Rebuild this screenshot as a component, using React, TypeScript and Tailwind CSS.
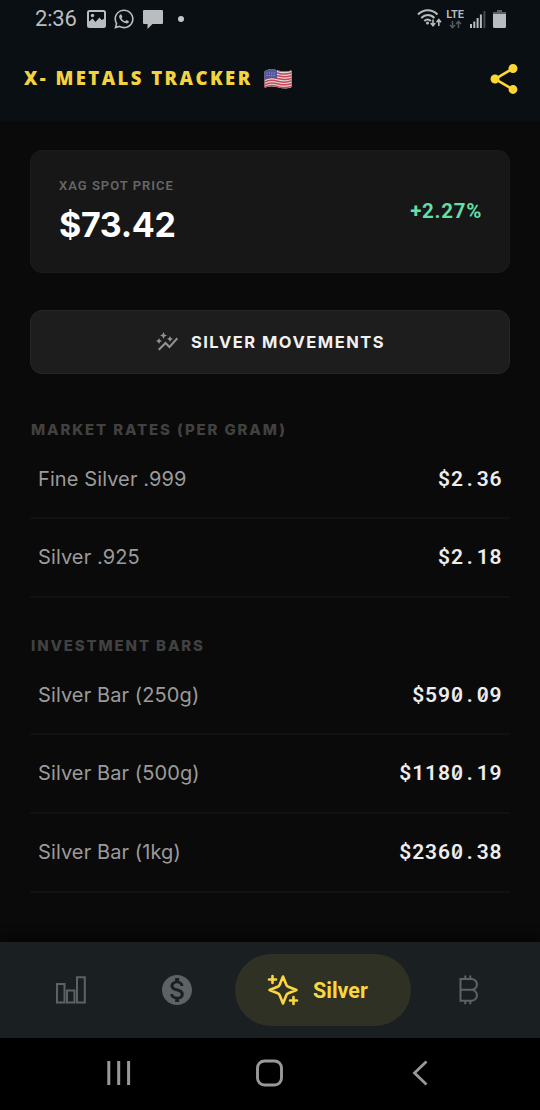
import { useState, type ReactNode } from "react";
import { MdAutoGraph, MdMonetizationOn, MdShare } from "react-icons/md";
import { FaWhatsapp } from "react-icons/fa";

type Rate = { label: string; price: string };

const MARKET_RATES: Rate[] = [
  { label: "Fine Silver .999", price: "$2.36" },
  { label: "Silver .925", price: "$2.18" },
];

const INVESTMENT_BARS: Rate[] = [
  { label: "Silver Bar (250g)", price: "$590.09" },
  { label: "Silver Bar (500g)", price: "$1180.19" },
  { label: "Silver Bar (1kg)", price: "$2360.38" },
];

function StatusBar() {
  return (
    <div className="flex h-[37px] items-center justify-between pl-[35px] pr-[34px] text-[#b9bdc0]">
      <div className="flex items-center">
        <span className="w-[52px] font-['Roboto',sans-serif] text-[22px] leading-none tracking-[-0.2px]">2:36</span>
        <svg width="19" height="18" viewBox="0 0 19 18" fill="none">
          <rect x="1" y="1" width="17" height="16" rx="1.5" stroke="currentColor" strokeWidth="2" />
          <path d="M1 12.5l4.500-4 3 3.500 4-4.500 2 2.500L18 8.500V17H1z" fill="currentColor" />
          <circle cx="5.5" cy="5.5" r="1.7" fill="currentColor" />
        </svg>
        <FaWhatsapp className="ml-[7px] h-[22px] w-[22px]" />
        <svg className="ml-2 mt-px" width="20" height="19" viewBox="0 0 20 19" fill="currentColor">
          <path d="M1 0h18a1 1 0 0 1 1 1v12a1 1 0 0 1-1 1H9.500l-5 5v-5H1a1 1 0 0 1-1-1V1a1 1 0 0 1 1-1z" />
        </svg>
        <span className="ml-[15px] h-[6px] w-[6px] rounded-full bg-[#c4c8ca]" />
      </div>

      <div className="flex items-center">
        <svg width="25" height="20" viewBox="0 0 25 20" fill="none" stroke="currentColor" strokeWidth="2">
          <path d="M1 5.500C6.500-.3 15-.3 20.500 5.500M4.200 9c4-4 9.400-4 13.200 0M7.300 12.100c2.200-2 4.600-2 6.600 0" />
          <circle cx="10.5" cy="14" r="1.5" fill="currentColor" stroke="none" />
          <path d="M16 10.500v6M13.800 14l2.200 2.700 2.200-2.700M21.800 17v-6M19.600 13.200l2.200-2.700 2.200 2.700" strokeWidth="1.6" />
        </svg>
        <div className="ml-[4px] flex flex-col items-center">
          <span className="font-['Roboto',sans-serif] text-[11px] font-semibold leading-[11px]">LTE</span>
          <svg width="13" height="9" viewBox="0 0 13 9" fill="none" stroke="#54595c" strokeWidth="1.5">
            <path d="M3.500 1v6.500M1 5l2.500 2.700L6 5M9.500 8V1.500M7 4l2.500-2.700L12 4" />
          </svg>
        </div>
        <svg className="ml-[6px]" width="16" height="18" viewBox="0 0 16 18" fill="currentColor">
          <path d="M0 14h2v4H0zM3.300 11.500h2V18h-2zM6.600 8h2v10h-2zM9.900 4.500h2V18h-2z" />
          <path d="M13.400 1h2v17h-2z" fill="#45494c" />
        </svg>
        <svg className="ml-[7px]" width="13" height="18" viewBox="0 0 13 18">
          <path d="M4 0h5v2H4zM0 2h13v3H0z" fill="#5b6063" />
          <path d="M0 4h13v12.500a1.500 1.500 0 0 1-1.500 1.500h-10A1.500 1.500 0 0 1 0 16.500z" fill="currentColor" />
        </svg>
      </div>
    </div>
  );
}

function UsFlag() {
  return (
    <svg width="28" height="20" viewBox="0 0 28 20">
      <clipPath id="flag">
        <path d="M1 2C7-.8 10 .5 15 1.700s8 1 12-.2q.7 0 .7.800v15.300q0 .6-.6.800c-5 1.600-8 1.300-12.500.2S6 16.800 1.400 18.600Q.5 18.800.5 18V3Q.5 2.300 1 2z" />
      </clipPath>
      <g clipPath="url(#flag)">
        <path d="M0 0h28v20H0z" fill="#dfd9dc" />
        <g fill="none" stroke="#c74755" strokeWidth="1.5">
          <path d="M0 2.500C7-.8 10 .5 15 1.700s8 1 13-.7" />
          <path d="M0 5.200C7 1.900 10 3.200 15 4.400s8 1 13-.7" />
          <path d="M0 7.900C7 4.600 10 5.900 15 7.100s8 1 13-.7" />
          <path d="M0 10.600C7 7.300 10 8.600 15 9.800s8 1 13-.7" />
          <path d="M0 13.300C7 10 10 11.300 15 12.500s8 1 13-.7" />
          <path d="M0 16C7 12.700 10 14 15 15.200s8 1 13-.7" />
          <path d="M0 18.700C7 15.400 10 16.700 15 17.900s8 1 13-.7" />
        </g>
        <path d="M0 0h13v9.800C9 8.700 6 8.600 0 10.800z" fill="#52599a" />
        <path d="M2.500 4h9M2.500 6.500h9" stroke="#a4a8d0" strokeWidth=".9" strokeDasharray="1 1.4" />
      </g>
    </svg>
  );
}

// Fixed width cells keep the decimals of every row in one column
function Price({ value }: { value: string }) {
  return (
    <span className="mt-px flex font-['Roboto',sans-serif] text-[21px] font-semibold leading-none text-[#ededed]">
      {value.split("").map((char, i) => (
        <span key={i} className="relative flex w-[12.9px] justify-center">
          {char}
          {char === "0" && (
            <span className="absolute left-[5.8px] top-[7px] h-[8px] w-[1.5px] rotate-[32deg] bg-[#d0d0d0]" />
          )}
        </span>
      ))}
    </span>
  );
}

function RateSection({ title, rates }: { title: string; rates: Rate[] }) {
  return (
    <section>
      <h2 className="pl-px text-[15px] font-extrabold leading-[18px] tracking-[1.85px] text-[#414141]">{title}</h2>
      <div>
        {rates.map((rate, i) => (
          <div
            key={rate.label}
            className={`flex items-center justify-between border-b-2 border-[#111] px-2 ${
              i === 0 ? "h-[80px] pt-px" : "h-[79px] pb-px"
            }`}
          >
            <span className="text-[20px] leading-7 tracking-[0.1px] text-[#9b9b9b]">{rate.label}</span>
            <Price value={rate.price} />
          </div>
        ))}
      </div>
    </section>
  );
}

function BarsIcon() {
  return (
    <svg width="30" height="28" viewBox="0 0 30 28" fill="none" stroke="currentColor" strokeWidth="2">
      <path d="M1 8h7.500v18.500H1zM11 14.500h7.500v12H11zM21 1.200h7.800v25.300H21z" />
    </svg>
  );
}

function SparkleIcon() {
  return (
    <svg width="32" height="32" viewBox="0 0 32 32" fill="none" stroke="currentColor" strokeWidth="2.6" strokeLinejoin="round" strokeLinecap="round">
      <path d="M16 2.500l3.300 8.200q.6 1.500 2 2l8.200 3.300-8.200 3.300q-1.400.5-2 2L16 29.500l-3.300-8.200q-.6-1.500-2-2L2.500 16l8.200-3.300q1.400-.5 2-2z" />
      <path d="M5.500 2v7M2 5.500h7M26.500 23v7M23 26.500h7" />
    </svg>
  );
}

function BitcoinIcon() {
  return (
    <svg width="22" height="30" viewBox="0 0 22 30" fill="none" stroke="currentColor" strokeWidth="2">
      <path d="M1.500 4h12a5.300 5.300 0 0 1 0 10.800H2.500M13.500 14.800a5.300 5.300 0 0 1 0 10.900H1.500M2.500 4v21.700" />
      <path d="M7.300.5V4M12.300.5V4M7.300 25.700v3.500M12.300 25.700v3.500" />
    </svg>
  );
}

const TABS: { name: string; size: string; icon: ReactNode }[] = [
  { name: "Markets", size: "w-[70px] justify-center", icon: <BarsIcon /> },
  { name: "Gold", size: "ml-9 w-[70px] justify-center", icon: <MdMonetizationOn className="h-9 w-9" /> },
  { name: "Silver", size: "ml-[23px] w-[176px] pl-8", icon: <SparkleIcon /> },
  { name: "Bitcoin", size: "ml-[23px] w-[70px] justify-center", icon: <BitcoinIcon /> },
];

export default function App() {
  const [activeTab, setActiveTab] = useState("Silver");

  return (
    <div className="flex h-[1110px] w-[540px] flex-col overflow-hidden bg-[#0a0a0a] font-['Inter',sans-serif]">
      {/* Header */}
      <header className="h-[121px] bg-[#090f12]">
        <StatusBar />
        <div className="flex h-[83px] items-center justify-between pl-6 pr-[18px]">
          <div className="flex items-center">
            <h1 className="w-[240px] whitespace-nowrap font-['Open_Sans',sans-serif] text-[18.5px] font-extrabold leading-none tracking-[2.45px] text-[#f3d33f]">
              X- METALS TRACKER
            </h1>
            <UsFlag />
          </div>
          <button>
            <MdShare className="h-9 w-9 text-[#fdd633]" />
          </button>
        </div>
      </header>

      <main className="flex-1 px-[30px] pt-[29px]">
        {/* Spot price */}
        <div className="flex h-[123px] items-center justify-between rounded-xl border border-[#1b1b1b] bg-[#171717] px-7">
          <div>
            <p className="font-['Roboto',sans-serif] text-[13px] font-semibold leading-4 tracking-[1px] text-[#666]">XAG SPOT PRICE</p>
            <p className="mt-[11px] text-[34px] font-bold leading-10 tracking-[-0.3px] text-white">$73.42</p>
          </div>
          <span className="-mr-px font-['Roboto',sans-serif] text-[20.5px] font-bold tracking-[0.7px] text-[#62dfa4]">+2.27%</span>
        </div>

        <button className="mt-[37px] flex h-[64px] w-full items-center justify-center rounded-xl border border-[#262626] bg-[#1d1d1d]">
          <MdAutoGraph className="h-6 w-6 text-[#939393]" />
          <span className="ml-3 text-[16.5px] font-bold tracking-[1.5px] text-[#f1f1f1]">SILVER MOVEMENTS</span>
        </button>

        <div className="mt-[47px] flex flex-col gap-[39px]">
          <RateSection title="MARKET RATES (PER GRAM)" rates={MARKET_RATES} />
          <RateSection title="INVESTMENT BARS" rates={INVESTMENT_BARS} />
        </div>
      </main>

      {/* Tabs */}
      <nav className="flex h-24 items-center bg-[#1a1f22] pl-9 shadow-[0_-4px_10px_#050505]">
        {TABS.map((tab) => (
          <button
            key={tab.name}
            onClick={() => setActiveTab(tab.name)}
            className={`flex h-[72px] items-center rounded-full ${tab.size} ${
              activeTab === tab.name ? "bg-[#2f3125] text-[#fad640]" : "text-[#5d6265]"
            }`}
          >
            {tab.icon}
            {activeTab === tab.name && (
              <span className="ml-[14px] mt-0.5 font-['Roboto',sans-serif] text-[21.5px] font-bold">{tab.name}</span>
            )}
          </button>
        ))}
      </nav>

      {/* System navigation */}
      <div className="flex h-[72px] items-center bg-black pb-0.5 pl-[107px] text-[#999]">
        <svg width="24" height="26" viewBox="0 0 24 26" stroke="currentColor" strokeWidth="3">
          <path d="M1.800 1v24M11.700 1v24M21.600 1v24" />
        </svg>
        <svg className="ml-[124px]" width="29" height="28" viewBox="0 0 29 28" fill="none" stroke="currentColor" strokeWidth="2.9">
          <rect x="2.5" y="2" width="24" height="24" rx="7" />
        </svg>
        <svg className="ml-[128px]" width="17" height="26" viewBox="0 0 17 26" fill="none" stroke="currentColor" strokeWidth="2.8">
          <path d="M14.500 1.500L2.500 13l12 11.500" />
        </svg>
      </div>
    </div>
  );
}
